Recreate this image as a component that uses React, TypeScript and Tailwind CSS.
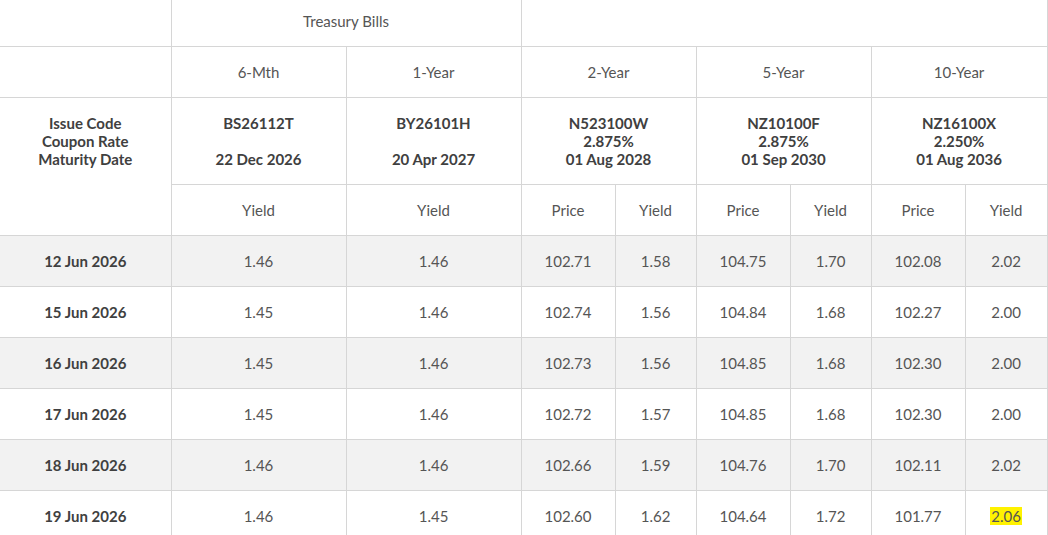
import React from "react";

type Row = {
  date: string;
  bills: [string, string];
  bonds: [string, string, string, string, string, string];
  hi?: boolean;
};

const rows: Row[] = [
  { date: "12 Jun 2026", bills: ["1.46", "1.46"], bonds: ["102.71", "1.58", "104.75", "1.70", "102.08", "2.02"] },
  { date: "15 Jun 2026", bills: ["1.45", "1.46"], bonds: ["102.74", "1.56", "104.84", "1.68", "102.27", "2.00"] },
  { date: "16 Jun 2026", bills: ["1.45", "1.46"], bonds: ["102.73", "1.56", "104.85", "1.68", "102.30", "2.00"] },
  { date: "17 Jun 2026", bills: ["1.45", "1.46"], bonds: ["102.72", "1.57", "104.85", "1.68", "102.30", "2.00"] },
  { date: "18 Jun 2026", bills: ["1.46", "1.46"], bonds: ["102.66", "1.59", "104.76", "1.70", "102.11", "2.02"] },
  { date: "19 Jun 2026", bills: ["1.46", "1.45"], bonds: ["102.60", "1.62", "104.64", "1.72", "101.77", "2.06"], hi: true },
];

const cell = "border-b border-l border-[#d6d6d6] text-center align-middle p-0";
const first = "border-b border-[#d6d6d6] text-center align-middle p-0";

const App = () => {
  return (
    <div
      className="bg-white text-[15px] text-[#555]"
      style={{ fontFamily: "Lato, 'Noto Sans', sans-serif" }}
    >
      <table className="table-fixed border-collapse w-[1047px]">
        <colgroup>
          <col className="w-[171px]" />
          <col className="w-[175px]" />
          <col className="w-[175px]" />
          <col className="w-[94px]" />
          <col className="w-[81px]" />
          <col className="w-[94px]" />
          <col className="w-[81px]" />
          <col className="w-[94px]" />
          <col className="w-[82px]" />
        </colgroup>
        <thead>
          <tr className="h-[46px]">
            <td className={first} />
            <th colSpan={2} className={`${cell} font-normal pb-[3px]`}>
              Treasury Bills
            </th>
            <td colSpan={6} className={`${cell} border-r`} />
          </tr>
          <tr className="h-[51px] [&>th]:pt-[2px]">
            <td className={first} />
            <th className={`${cell} font-normal`}>6-Mth</th>
            <th className={`${cell} font-normal`}>1-Year</th>
            <th colSpan={2} className={`${cell} font-normal`}>2-Year</th>
            <th colSpan={2} className={`${cell} font-normal`}>5-Year</th>
            <th colSpan={2} className={`${cell} font-normal border-r`}>10-Year</th>
          </tr>
          <tr className="h-[87px] font-bold text-[#404040] leading-[18px]">
            <th className="text-center align-middle p-0">
              Issue Code
              <br />
              Coupon Rate
              <br />
              Maturity Date
            </th>
            <th className={cell}>
              BS26112T
              <br />
              <br />
              22 Dec 2026
            </th>
            <th className={cell}>
              BY26101H
              <br />
              <br />
              20 Apr 2027
            </th>
            <th colSpan={2} className={cell}>
              N523100W
              <br />
              2.875%
              <br />
              01 Aug 2028
            </th>
            <th colSpan={2} className={cell}>
              NZ10100F
              <br />
              2.875%
              <br />
              01 Sep 2030
            </th>
            <th colSpan={2} className={`${cell} border-r`}>
              NZ16100X
              <br />
              2.250%
              <br />
              01 Aug 2036
            </th>
          </tr>
          <tr className="h-[51px] [&>th]:pt-[2px]">
            <td className={first} />
            <th className={`${cell} font-normal`}>Yield</th>
            <th className={`${cell} font-normal`}>Yield</th>
            <th className={`${cell} font-normal`}>Price</th>
            <th className={`${cell} font-normal`}>Yield</th>
            <th className={`${cell} font-normal`}>Price</th>
            <th className={`${cell} font-normal`}>Yield</th>
            <th className={`${cell} font-normal`}>Price</th>
            <th className={`${cell} font-normal border-r`}>Yield</th>
          </tr>
        </thead>
        <tbody>
          {rows.map((r, i) => (
            <tr
              key={r.date}
              className={`h-[51px] [&>td]:pt-[2px] ${i % 2 === 0 ? "bg-[#f2f2f2]" : "bg-white"}`}
            >
              <td className={`${first} font-bold text-[#404040]`}>{r.date}</td>
              {r.bills.map((v, j) => (
                <td key={"b" + j} className={cell}>
                  {v}
                </td>
              ))}
              {r.bonds.map((v, j) => (
                <td key={"n" + j} className={`${cell} ${j === 5 ? "border-r" : ""}`}>
                  {r.hi && j === 5 ? (
                    <span className="bg-[#fff200] px-[1px]">{v}</span>
                  ) : (
                    v
                  )}
                </td>
              ))}
            </tr>
          ))}
        </tbody>
      </table>
    </div>
  );
};

export default App;
